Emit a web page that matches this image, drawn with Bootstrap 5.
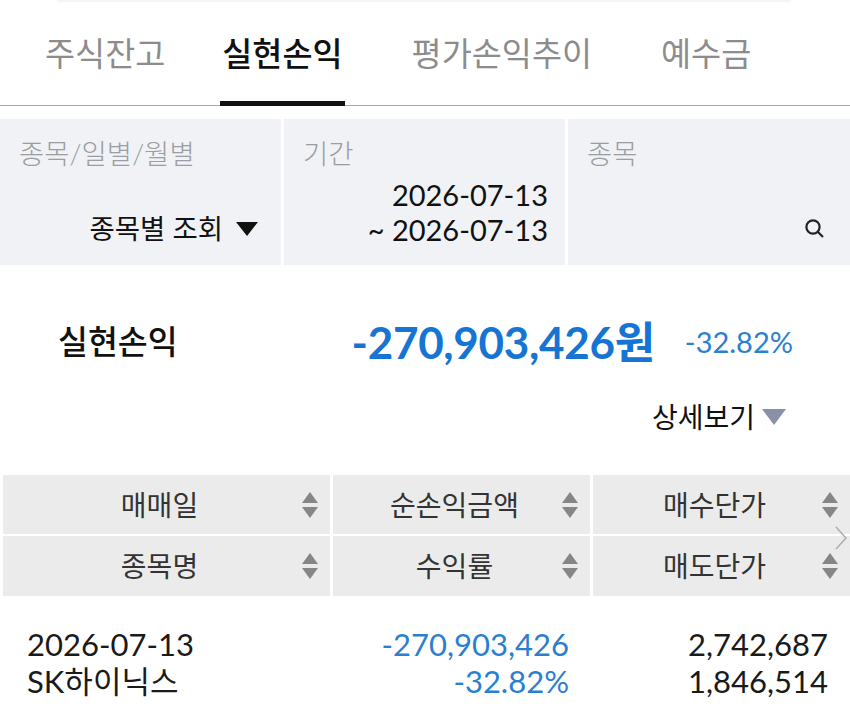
<!DOCTYPE html>
<html lang="ko"><head><meta charset="utf-8">
<link rel="stylesheet" href="https://cdn.jsdelivr.net/npm/bootstrap@5.3.0/dist/css/bootstrap.min.css">
<style>
html,body{margin:0;background:#fff;height:724px;overflow:hidden}
body{font-family:"Lato","Noto Sans CJK KR",sans-serif;color:#111;font-weight:400}
.page-shell{width:850px;height:724px;overflow:hidden;position:relative}
.top-strip{height:2px;margin:0 59px 1px 57px;background:#f5f5f5}
.tab-bar{height:103px;border-bottom:1px solid #a8a8a8;padding-left:45px}
.tab-item{font-size:32.7px;line-height:42px;color:#8c8c8c;height:103px;padding-top:30px;margin-right:69px;white-space:nowrap}
.tab-item:first-child{margin-right:55px}
.tab-item.on{color:#111;font-weight:500;border-bottom:5px solid #111;padding-left:2px;padding-right:2px;margin-right:67px}
.filter-wrap{margin-top:13px;height:146px;display:grid;grid-template-columns:281px 281px 282px;column-gap:3px}
.filter-cell{background:#f0f2f5;padding:16px 17px 18px 19px;font-size:28px;line-height:35px}
.filter-cell:first-child{padding-right:23px}
.filter-cell:last-child{padding-right:25px}
.filter-label{font-size:27.5px;line-height:38px;color:#9a9da1;font-weight:300}
.filter-value{text-align:right;line-height:35px;margin-top:auto;font-size:29px}
.filter-pick{font-size:27.5px;line-height:37px}
.tri-down{display:inline-block;width:0;height:0;border-left:11px solid transparent;border-right:11px solid transparent;border-top:14px solid #111;margin-left:13px;vertical-align:3px}
.find-icon{display:block;margin:0 0 8px auto}
.summary-row{margin-top:51px;height:52px;padding:0 57px 0 58px}
.summary-title{font-size:32.5px;font-weight:500}
.summary-money{font-size:44px;font-weight:700;color:#1574d4;letter-spacing:-.3px;line-height:52px}
.summary-pct{font-size:29px;color:#2a80cf;margin-left:30px}
.detail-row{height:40px;margin-top:29px;padding-right:64px;font-size:28px;gap:7px}
.tri-grey{display:inline-block;width:0;height:0;border-left:12px solid transparent;border-right:12px solid transparent;border-top:16px solid #8a90a8}
.head-grid{margin-top:38px;display:grid;grid-template-columns:327px 257px 257px;grid-template-rows:59px 60px;column-gap:3px;row-gap:2px;padding-left:3px;width:850px;overflow:hidden}
.head-cell{background:#ebebeb;font-size:28px;display:flex;align-items:center;position:relative;color:#333}
.head-name{flex:1;text-align:center;padding-left:14px}
.sort-mark{display:flex;flex-direction:column;gap:4px;margin-right:13px;width:15px;flex:none;align-items:center}
.sort-up,.sort-down{width:0;height:0;border-left:8px solid transparent;border-right:8px solid transparent}
.sort-up{border-bottom:11px solid #868686}.sort-down{border-top:11px solid #868686}
.data-grid{margin-top:30px;display:grid;grid-template-columns:240px 302px 259px;font-size:31px;line-height:37px;padding-left:27px;color:#1a1a1a}
.data-blue{color:#2a80cf;text-align:right}
.data-num{text-align:right}
.more-chevron{position:absolute;right:2px;top:526px}
</style></head>
<body>
<div class="page-shell d-flex flex-column">
<div class="top-strip"></div>
<nav class="tab-bar d-flex">
<div class="tab-item">주식잔고</div>
<div class="tab-item on">실현손익</div>
<div class="tab-item">평가손익추이</div>
<div class="tab-item">예수금</div>
</nav>
<section class="filter-wrap">
<div class="filter-cell d-flex flex-column"><div class="filter-label">종목/일별/월별</div><div class="filter-value filter-pick">종목별 조회<span class="tri-down"></span></div></div>
<div class="filter-cell d-flex flex-column"><div class="filter-label">기간</div><div class="filter-value">2026-07-13<br>~ 2026-07-13</div></div>
<div class="filter-cell d-flex flex-column"><div class="filter-label">종목</div><div class="filter-value"><svg class="find-icon" width="22" height="22" viewBox="0 0 22 22" fill="none" stroke="#222" stroke-width="2.2"><circle cx="10" cy="10" r="6.6"/><path d="M15 15l5 5"/></svg></div></div>
</section>
<section class="summary-row d-flex align-items-center">
<div class="summary-title flex-grow-1">실현손익</div>
<div class="summary-money">-270,903,426원</div>
<div class="summary-pct">-32.82%</div>
</section>
<div class="detail-row d-flex justify-content-end align-items-center"><span>상세보기</span><span class="tri-grey"></span></div>
<section class="head-grid">
<div class="head-cell"><span class="head-name">매매일</span><span class="sort-mark"><i class="sort-up"></i><i class="sort-down"></i></span></div>
<div class="head-cell"><span class="head-name">순손익금액</span><span class="sort-mark"><i class="sort-up"></i><i class="sort-down"></i></span></div>
<div class="head-cell"><span class="head-name">매수단가</span><span class="sort-mark"><i class="sort-up"></i><i class="sort-down"></i></span></div>
<div class="head-cell"><span class="head-name">종목명</span><span class="sort-mark"><i class="sort-up"></i><i class="sort-down"></i></span></div>
<div class="head-cell"><span class="head-name">수익률</span><span class="sort-mark"><i class="sort-up"></i><i class="sort-down"></i></span></div>
<div class="head-cell"><span class="head-name">매도단가</span><span class="sort-mark"><i class="sort-up"></i><i class="sort-down"></i></span></div>
</section>
<section class="data-grid">
<div>2026-07-13</div><div class="data-blue">-270,903,426</div><div class="data-num">2,742,687</div>
<div>SK하이닉스</div><div class="data-blue">-32.82%</div><div class="data-num">1,846,514</div>
</section>
<svg class="more-chevron" width="14" height="24" viewBox="0 0 14 24" fill="none" stroke="#aaa" stroke-width="1.4"><path d="M2 1l10 11L2 23"/></svg>
</div>
</body></html>
